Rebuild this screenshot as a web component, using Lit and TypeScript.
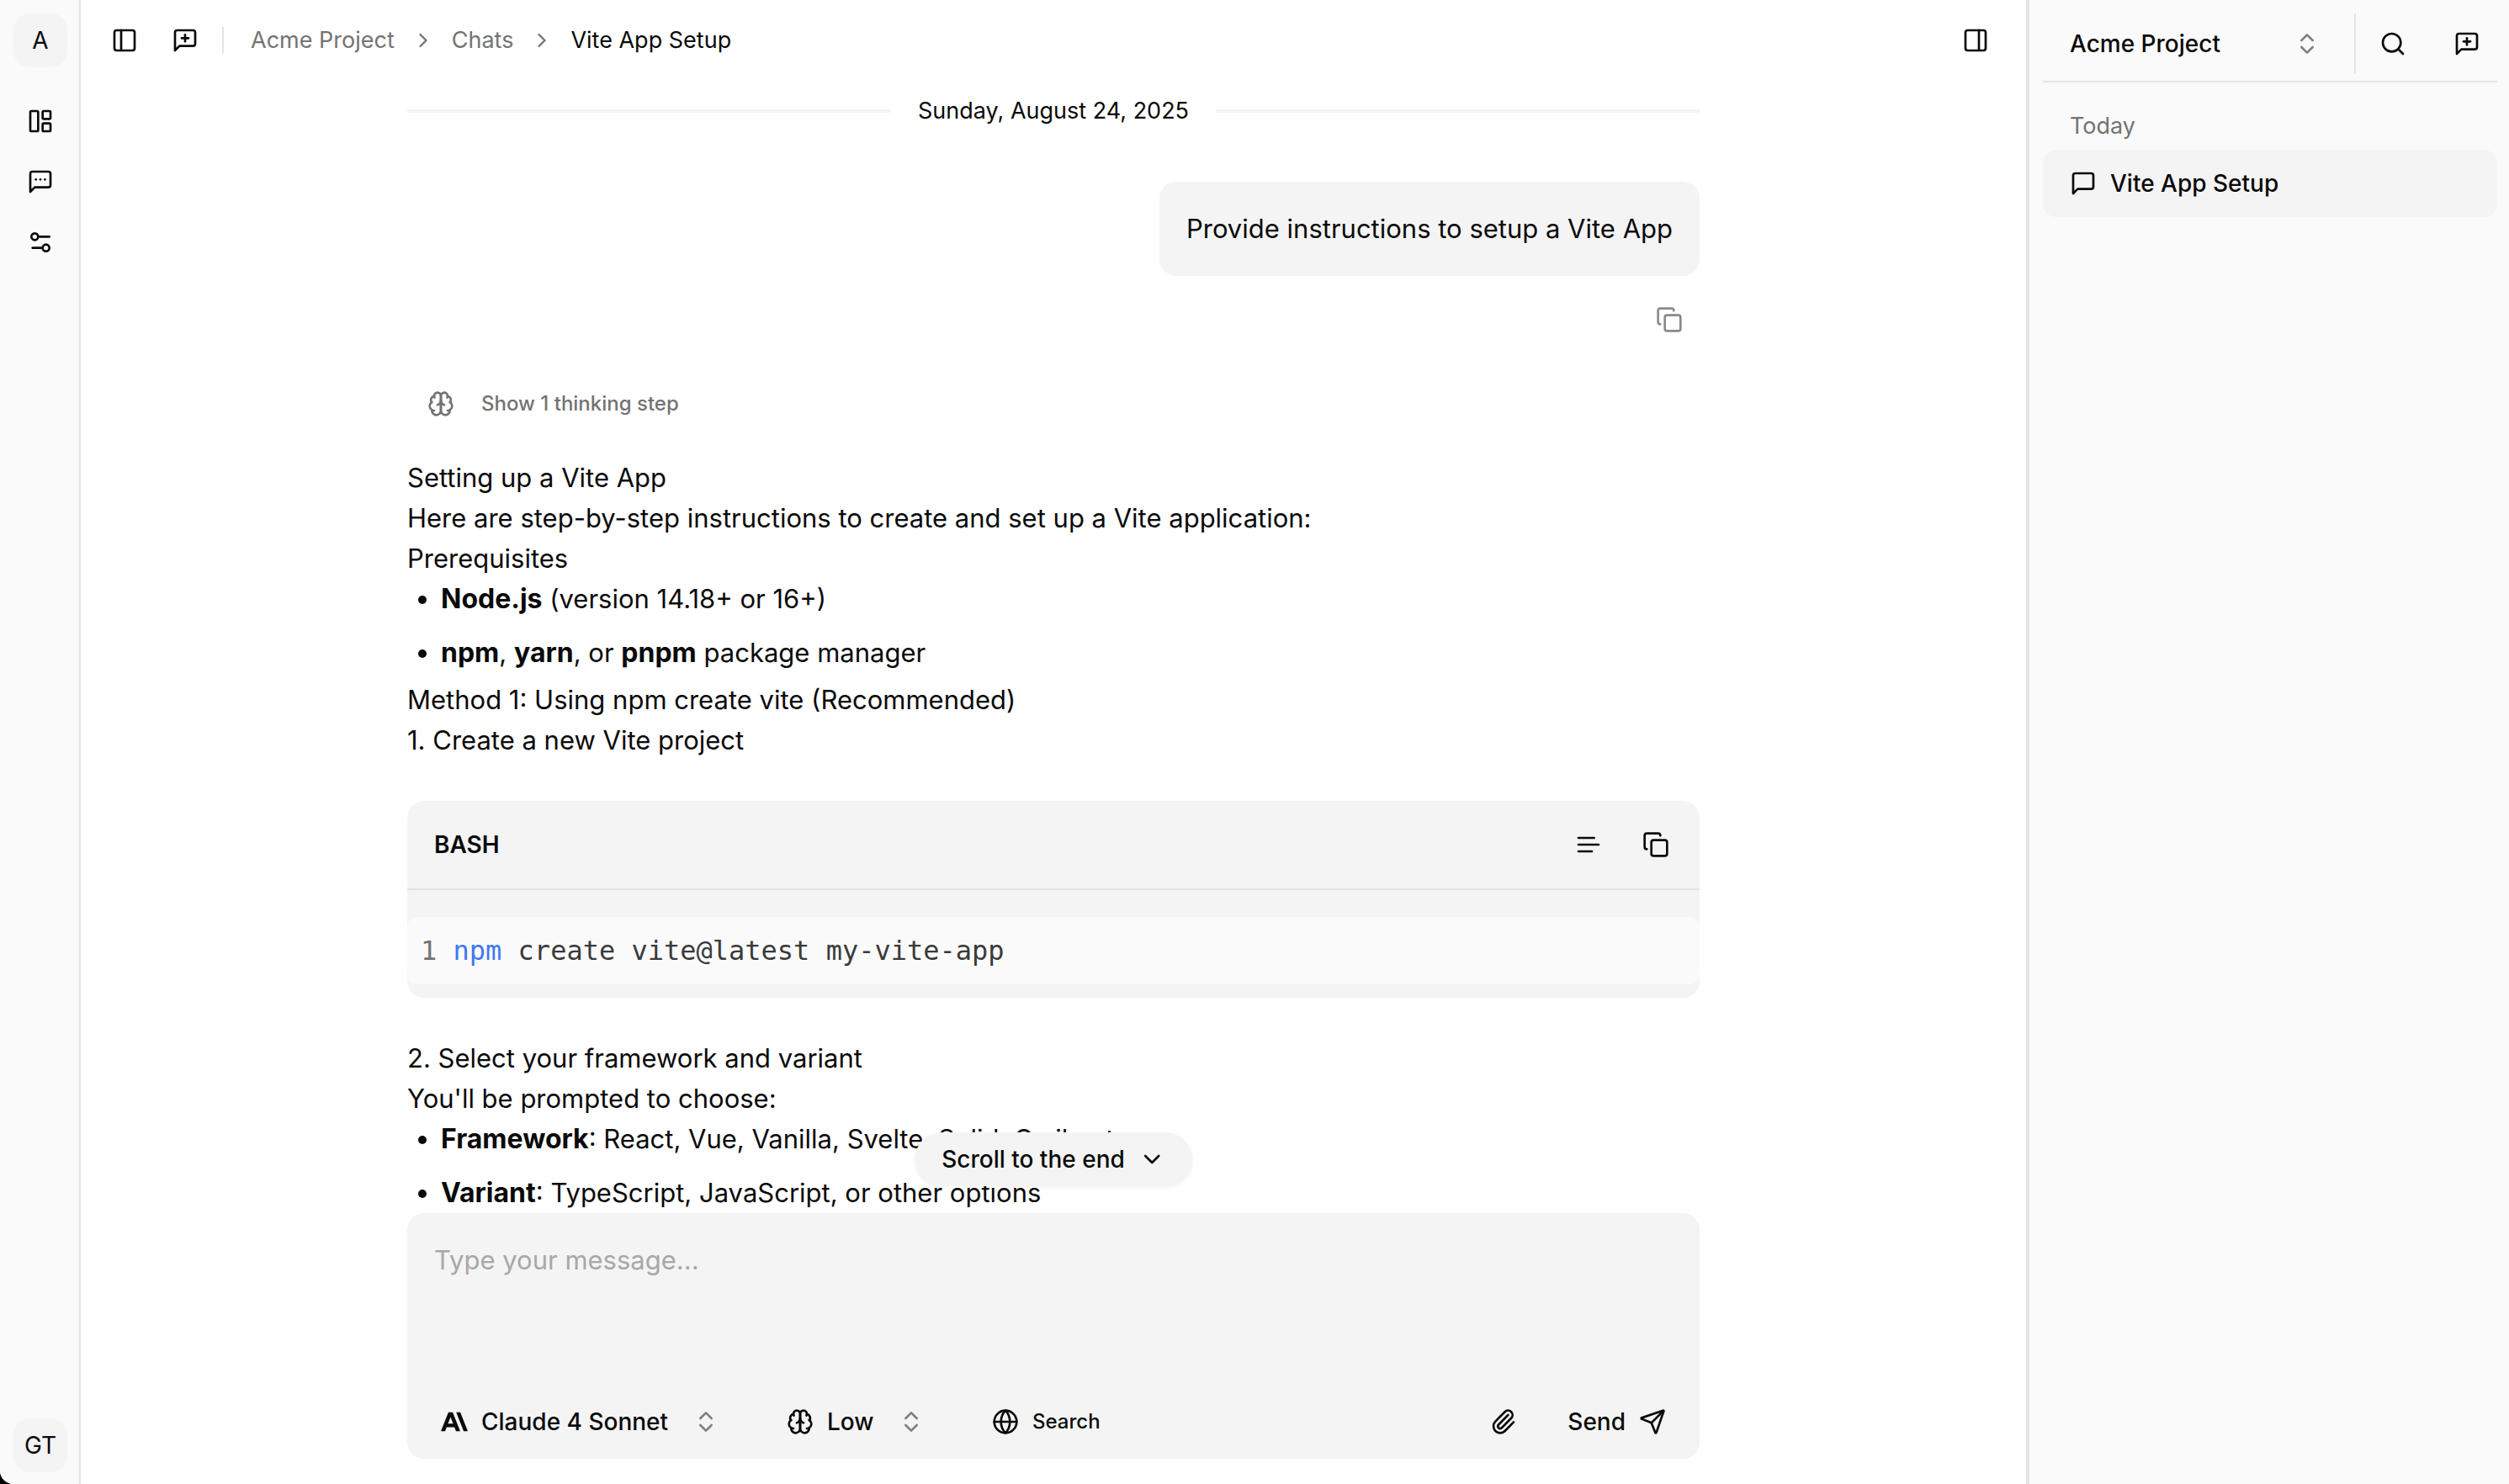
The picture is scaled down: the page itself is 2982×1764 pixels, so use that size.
import { LitElement, html, css, svg, SVGTemplateResult } from "lit";
import { customElement, property } from "lit/decorators.js";

/* Stroke icons on a 24-unit grid. */
const ICONS: Record<string, SVGTemplateResult> = {
  panelLeft: svg`<rect width="18" height="18" x="3" y="3" rx="2"/><path d="M9 3v18"/>`,
  panelRight: svg`<rect width="18" height="18" x="3" y="3" rx="2"/><path d="M15 3v18"/>`,
  messagePlus: svg`<path d="M21 15a2 2 0 0 1-2 2H7l-4 4V5a2 2 0 0 1 2-2h14a2 2 0 0 1 2 2z"/><path d="M12 7v6"/><path d="M9 10h6"/>`,
  messageDots: svg`<path d="M21 15a2 2 0 0 1-2 2H7l-4 4V5a2 2 0 0 1 2-2h14a2 2 0 0 1 2 2z"/><path d="M8 10h.01"/><path d="M12 10h.01"/><path d="M16 10h.01"/>`,
  message: svg`<path d="M21 15a2 2 0 0 1-2 2H7l-4 4V5a2 2 0 0 1 2-2h14a2 2 0 0 1 2 2z"/>`,
  layout: svg`<rect width="7" height="18" x="3" y="3" rx="1"/><rect width="7" height="7" x="14" y="3" rx="1"/><rect width="7" height="7" x="14" y="14" rx="1"/>`,
  sliders: svg`<path d="M20 7h-9"/><path d="M14 17H5"/><circle cx="17" cy="17" r="3"/><circle cx="7" cy="7" r="3"/>`,
  chevronRight: svg`<path d="m9 18 6-6-6-6"/>`,
  chevronDown: svg`<path d="m6 9 6 6 6-6"/>`,
  upDown: svg`<path d="m7 15 5 5 5-5"/><path d="m7 9 5-5 5 5"/>`,
  search: svg`<circle cx="11" cy="11" r="8"/><path d="m21 21-4.3-4.3"/>`,
  copy: svg`<rect width="14" height="14" x="8" y="8" rx="2"/><path d="M4 16c-1.1 0-2-.9-2-2V4c0-1.1.9-2 2-2h10c1.1 0 2 .9 2 2"/>`,
  textLines: svg`<path d="M17 6H3"/><path d="M21 12H3"/><path d="M15 18H3"/>`,
  brain: svg`<path d="M12 5a3 3 0 1 0-5.997.125 4 4 0 0 0-2.526 5.77 4 4 0 0 0 .556 6.588A4 4 0 1 0 12 18Z"/><path d="M12 5a3 3 0 1 1 5.997.125 4 4 0 0 1 2.526 5.77 4 4 0 0 1-.556 6.588A4 4 0 1 1 12 18Z"/><path d="M15 13a4.5 4.5 0 0 1-3-4 4.5 4.5 0 0 1-3 4"/><path d="M17.599 6.5a3 3 0 0 0 .399-1.375"/><path d="M6.003 5.125A3 3 0 0 0 6.401 6.5"/><path d="M3.477 10.896a4 4 0 0 1 .585-.396"/><path d="M19.938 10.5a4 4 0 0 1 .585.396"/><path d="M6 18a4 4 0 0 1-1.967-.516"/><path d="M19.967 17.484A4 4 0 0 1 18 18"/>`,
  globe: svg`<circle cx="12" cy="12" r="10"/><path d="M12 2a14.5 14.5 0 0 0 0 20 14.5 14.5 0 0 0 0-20"/><path d="M2 12h20"/>`,
  paperclip: svg`<path d="M13.234 20.252 21 12.3"/><path d="m16 6-8.414 8.586a2 2 0 0 0 0 2.828 2 2 0 0 0 2.828 0l8.414-8.586a4 4 0 0 0 0-5.656 4 4 0 0 0-5.656 0l-8.415 8.585a6 6 0 1 0 8.486 8.486"/>`,
  send: svg`<path d="M14.536 21.686a.5.5 0 0 0 .937-.024l6.5-19a.496.496 0 0 0-.635-.635l-19 6.5a.5.5 0 0 0-.024.937l7.93 3.18a2 2 0 0 1 1.112 1.11z"/><path d="m21.854 2.147-10.94 10.939"/>`,
  anthropic: svg`<path fill="currentColor" stroke="none" d="M17.3041 3.541h-3.6718l6.696 16.918H24Zm-10.6082 0L0 20.459h3.7442l1.3693-3.5527h7.0052l1.3693 3.5528h3.7442L10.5363 3.5409Zm-.3712 10.2232 2.2914-5.9456 2.2914 5.9456Z"/>`,
};

@customElement("ui-icon")
export class UiIcon extends LitElement {
  @property() name = "";

  static styles = css`
    :host { display: block; flex: none; width: 32px; height: 32px; }
    .glyph { display: block; width: 100%; height: 100%; }
  `;

  render() {
    return html`<svg class="glyph" viewBox="0 0 24 24" fill="none" stroke="currentColor"
      stroke-width="2" stroke-linecap="round" stroke-linejoin="round" aria-hidden="true">${ICONS[this.name]}</svg>`;
  }
}

@customElement("app-root")
export class AppRoot extends LitElement {
  static styles = css`
    :host {
      --ink: #0a0a0a;
      --muted: #737373;
      --line: #e4e4e4;
      --soft: #f4f4f4;
      --panel: #fafafa;
      display: block;
      background: #000;
      color: var(--ink);
      font-family: Inter, "Liberation Sans", sans-serif;
      font-size: 28px;
      line-height: 40px;
    }
    * { box-sizing: border-box; }
    button, select, textarea {
      margin: 0; padding: 0; border: 0; background: none;
      color: inherit; font: inherit; appearance: none; cursor: pointer;
    }
    a { color: inherit; text-decoration: none; }
    p, h1, h2, h3, ul, ol, pre { margin: 0; padding: 0; font: inherit; }

    .shell {
      display: flex; height: 100vh; overflow: hidden;
      background: #fff; border-bottom-left-radius: 16px;
    }

    .rail {
      flex: none; width: 96px; padding: 16px 0 14px;
      display: flex; flex-direction: column; align-items: center;
      background: var(--panel); border-right: 2px solid var(--line);
    }
    .avatar {
      width: 64px; height: 64px; border-radius: 20px; background: var(--soft);
      margin-left: 2px;
    }
    .rail-nav {
      display: flex; flex-direction: column; flex: 1;
      padding-top: 28px; margin-left: 2px;
    }
    .square {
      display: flex; align-items: center; justify-content: center;
      flex: none; width: 72px; height: 72px; border-radius: 16px;
    }

    .main { flex: 1; min-width: 0; display: flex; flex-direction: column; }
    .topbar {
      flex: none; height: 96px; padding: 0 24px 0 16px;
      display: flex; align-items: center;
    }
    .divider { width: 2px; height: 32px; margin: 0 32px 0 8px; background: var(--line); }
    .crumbs {
      flex: 1; display: flex; align-items: center; gap: 20px;
      list-style: none; color: var(--muted); font-size: 27px;
    }
    .crumbs ui-icon { width: 28px; height: 28px; }
    .crumb { display: flex; align-items: center; gap: 20px; }
    .current { color: var(--ink); }

    .stage { flex: 1; min-height: 0; position: relative; overflow: hidden; }
    .column { width: 100%; max-width: 1536px; margin: 0 auto; }
    .log { display: flex; flex-direction: column; padding-top: 16px; }
    .date { display: flex; align-items: center; gap: 32px; font-size: 27px; }
    .date::before, .date::after { content: ""; flex: 1; height: 4px; background: var(--soft); }
    .sent {
      display: flex; flex-direction: column; align-items: flex-end; gap: 16px;
      margin-top: 64px;
    }
    .bubble {
      padding: 32px; border-radius: 20px; background: var(--soft);
      font-size: 31px; line-height: 48px;
    }
    .faded { color: #8a8a8a; }
    .thinking {
      display: flex; align-items: center; gap: 32px; align-self: flex-start;
      height: 64px; margin: 32px 0; padding: 0 24px;
      color: var(--muted); font-size: 24px; font-weight: 500;
    }
    .answer { font-size: 31px; line-height: 48px; }
    .points {
      display: flex; flex-direction: column; gap: 16px;
      padding: 0 0 8px 40px;
    }
    strong { font-size: 32px; font-weight: 700; }

    .code {
      margin: 48px 0; padding-bottom: 16px; border-radius: 20px;
      background: var(--soft); overflow: hidden;
    }
    .code-head {
      display: flex; align-items: center; gap: 8px; padding: 16px 16px 16px 32px;
      border-bottom: 2px solid var(--line);
    }
    .lang { flex: 1; font-size: 28px; font-weight: 600; }
    .snippet {
      margin-top: 32px; padding: 16px; border-radius: 12px;
      background: var(--panel); color: #3a3a3a;
      font-family: "DejaVu Sans Mono", monospace; font-size: 32px; line-height: 48px;
    }
    .snippet code { font: inherit; }
    .line-no { color: var(--muted); }
    .command { color: #4078f2; }

    .to-end {
      position: absolute; left: 50%; bottom: 32px; transform: translateX(-50%);
      display: flex; align-items: center; gap: 16px;
      height: 64px; padding: 0 32px; border-radius: 32px;
      background: var(--soft); font-weight: 500; white-space: nowrap;
      box-shadow: 0 2px 4px rgba(0, 0, 0, 0.05);
    }

    .composer {
      flex: none; display: flex; flex-direction: column;
      margin-bottom: 30px; padding: 32px 16px 8px;
      border-radius: 20px; background: var(--soft);
    }
    .message {
      display: block; height: 180px; padding: 0 16px; resize: none; outline: none;
      font-size: 31px; line-height: 48px; cursor: text;
    }
    .message::placeholder { color: #a8a8a8; opacity: 1; }
    .tools { display: flex; align-items: center; gap: 32px; }
    .pick {
      display: flex; align-items: center; gap: 16px;
      height: 72px; padding: 0 24px; font-weight: 500;
    }
    .caret { color: #808080; pointer-events: none; }
    .pick .caret { margin-left: 12px; }
    .small { font-size: 24px; }
    .actions { display: flex; align-items: center; gap: 16px; margin-left: auto; }

    .history {
      flex: none; width: 574px; padding: 16px 14px 0 16px;
      background: var(--panel); border-left: 4px solid var(--line);
    }
    .history-head {
      display: flex; align-items: center; gap: 8px;
      padding-bottom: 8px; border-bottom: 2px solid var(--line);
    }
    .project {
      flex: 1; display: flex; align-items: center; justify-content: space-between;
      padding: 0 32px; font-weight: 500;
    }
    .tall { width: 2px; height: 72px; background: var(--line); }
    .history-actions { display: flex; gap: 16px; }
    .group { padding: 32px 32px 8px; color: var(--muted); font-size: 27px; }
    .chat {
      display: flex; align-items: center; gap: 16px;
      height: 80px; padding: 0 32px; border-radius: 16px;
      background: var(--soft); font-weight: 500;
    }
  `;

  render() {
    return html`
      <div class="shell">
        <aside class="rail">
          <button class="avatar" aria-label="Workspace A">A</button>
          <nav class="rail-nav" aria-label="Primary">
            ${this.square("layout", "Dashboard")}
            ${this.square("messageDots", "Chats")}
            ${this.square("sliders", "Settings")}
          </nav>
          <button class="avatar" aria-label="Account GT">GT</button>
        </aside>

        <main class="main">
          <header class="topbar">
            ${this.square("panelLeft", "Toggle sidebar")}
            ${this.square("messagePlus", "New chat")}
            <span class="divider"></span>
            <ol class="crumbs">
              <li class="crumb"><a href="#project">Acme Project</a><ui-icon name="chevronRight"></ui-icon></li>
              <li class="crumb"><a href="#chats">Chats</a><ui-icon name="chevronRight"></ui-icon></li>
              <li class="current" aria-current="page">Vite App Setup</li>
            </ol>
            ${this.square("panelRight", "Toggle history")}
          </header>

          <div class="stage">
            <div class="column log">
              <div class="date">Sunday, August 24, 2025</div>
              <div class="sent">
                <p class="bubble">Provide instructions to setup a Vite App</p>
                ${this.square("copy", "Copy message", "faded")}
              </div>
              <button class="thinking"><ui-icon name="brain"></ui-icon>Show 1 thinking step</button>
              <article class="answer">
                <h1>Setting up a Vite App</h1>
                <p>Here are step-by-step instructions to create and set up a Vite application:</p>
                <h2>Prerequisites</h2>
                <ul class="points">
                  <li><strong>Node.js</strong> (version 14.18+ or 16+)</li>
                  <li><strong>npm</strong>, <strong>yarn</strong>, or <strong>pnpm</strong> package manager</li>
                </ul>
                <h2>Method 1: Using npm create vite (Recommended)</h2>
                <h3>1. Create a new Vite project</h3>
                <section class="code">
                  <div class="code-head">
                    <span class="lang">BASH</span>
                    ${this.square("textLines", "Wrap lines")}
                    ${this.square("copy", "Copy code")}
                  </div>
                  <pre class="snippet"><span class="line-no">1 </span><code><span class="command">npm</span> create vite@latest my-vite-app</code></pre>
                </section>
                <h3>2. Select your framework and variant</h3>
                <p>You'll be prompted to choose:</p>
                <ul class="points">
                  <li><strong>Framework</strong>: React, Vue, Vanilla, Svelte, Solid, Qwik, etc.</li>
                  <li><strong>Variant</strong>: TypeScript, JavaScript, or other options</li>
                </ul>
              </article>
            </div>
            <button class="to-end">Scroll to the end<ui-icon name="chevronDown"></ui-icon></button>
          </div>

          <form class="column composer" @submit=${(e: Event) => e.preventDefault()}>
            <textarea class="message" aria-label="Message" placeholder="Type your message..."></textarea>
            <div class="tools">
              <label class="pick">
                <ui-icon name="anthropic"></ui-icon>
                <select aria-label="Model"><option>Claude 4 Sonnet</option></select>
                <ui-icon class="caret" name="upDown"></ui-icon>
              </label>
              <label class="pick">
                <ui-icon name="brain"></ui-icon>
                <select aria-label="Thinking effort"><option>Low</option></select>
                <ui-icon class="caret" name="upDown"></ui-icon>
              </label>
              <button class="pick small" type="button"><ui-icon name="globe"></ui-icon>Search</button>
              <div class="actions">
                ${this.square("paperclip", "Attach file")}
                <button class="pick" type="submit">Send<ui-icon name="send"></ui-icon></button>
              </div>
            </div>
          </form>
        </main>

        <aside class="history">
          <div class="history-head">
            <label class="project">
              <select aria-label="Project"><option>Acme Project</option></select>
              <ui-icon class="caret" name="upDown"></ui-icon>
            </label>
            <span class="tall"></span>
            <div class="history-actions">
              ${this.square("search", "Search chats")}
              ${this.square("messagePlus", "New chat")}
            </div>
          </div>
          <h2 class="group">Today</h2>
          <a class="chat" href="#vite-app-setup"><ui-icon name="message"></ui-icon>Vite App Setup</a>
        </aside>
      </div>
    `;
  }

  private square(icon: string, label: string, extra = "") {
    return html`<button class="square ${extra}" type="button" aria-label=${label}><ui-icon name=${icon}></ui-icon></button>`;
  }
}
